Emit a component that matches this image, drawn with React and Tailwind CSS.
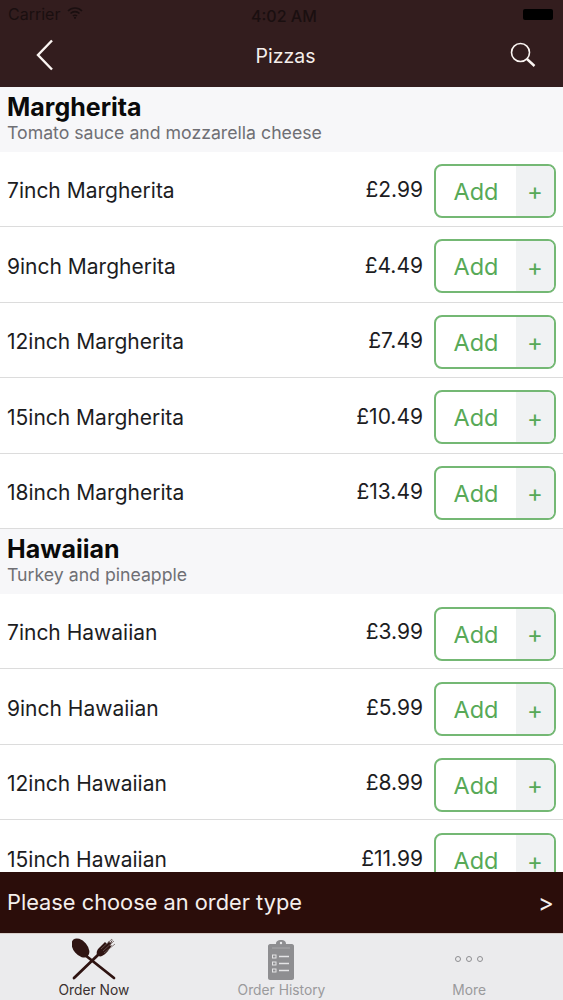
const margherita = [
  { name: "7inch Margherita", price: "£2.99" },
  { name: "9inch Margherita", price: "£4.49" },
  { name: "12inch Margherita", price: "£7.49" },
  { name: "15inch Margherita", price: "£10.49" },
  { name: "18inch Margherita", price: "£13.49" },
];

const hawaiian = [
  { name: "7inch Hawaiian", price: "£3.99" },
  { name: "9inch Hawaiian", price: "£5.99" },
  { name: "12inch Hawaiian", price: "£8.99" },
  { name: "15inch Hawaiian", price: "£11.99" },
];

const SectionHeader = ({ title, subtitle }) => (
  <div className="h-[64.5px] bg-[#f7f7f9] pl-[7px] pt-[4px]">
    <div className="text-[25px] leading-[32px] font-bold text-[#0a0a0a]">{title}</div>
    <div className="text-[17.7px] leading-[20px] text-[#6f6f74]">{subtitle}</div>
  </div>
);

const Row = ({ name, price, low }) => (
  <div className="h-[75.5px] flex items-center bg-white border-b border-[#dcdcdc] pl-[7px] pr-[7px] pt-[4px]">
    <div className="flex-1 text-[21px] text-[#1d1d1f]">{name}</div>
    <div className="text-[21px] text-[#1d1d1f] mr-[11px] -mt-[2px]">{price}</div>
    <div className={low ? "w-[122px] h-[54px] mt-[2px] flex rounded-[8px] border-2 border-[#74b874] overflow-hidden text-[#57a957]" : "w-[122px] h-[54px] flex rounded-[8px] border-2 border-[#74b874] overflow-hidden text-[#57a957]"}>
      <div className="w-[80px] flex items-center justify-center text-[23.5px] pt-[1px]">Add</div>
      <div className="flex-1 flex items-center justify-center bg-[#f0f2f3] text-[24px] pt-[3px]">+</div>
    </div>
  </div>
);

const SpoonFork = () => (
  <svg width="44" height="42" viewBox="0 0 44 42">
    <ellipse cx="8.5" cy="10" rx="7" ry="11" transform="rotate(-40 8.5 10)" fill="#2f1412" />
    <path d="M13 17L42 40" stroke="#2f1412" strokeWidth="2.8" strokeLinecap="round" />
    <path d="M2 40L27 16" stroke="#2f1412" strokeWidth="2.8" strokeLinecap="round" />
    <path d="M25 17C24 13 26 11 28 9L33 4L35 6L37 3L38 5L41 1L38 8L40 7C37 12 34 16 30 18C28 19 26 18 25 17Z" fill="#2f1412" />
    <path d="M29 11L40 1M31 13L42 3M32 15L43 6" stroke="#6b5a58" strokeWidth="0.8" fill="none" />
  </svg>
);

const Clipboard = () => (
  <svg width="26" height="40" viewBox="0 0 26 40">
    <path d="M2 4H8C8 1 10 0 13 0C16 0 18 1 18 4H24C25 4 26 5 26 6V38C26 39 25 40 24 40H2C1 40 0 39 0 38V6C0 5 1 4 2 4Z" fill="#8e8e91" />
    <circle cx="13" cy="3" r="1.2" fill="#ececee" />
    <path d="M4 8H22" stroke="#a9a9ab" strokeWidth="1" />
    <rect x="4.5" y="15" width="3.5" height="3" fill="none" stroke="#e4e4e6" strokeWidth="1" />
    <rect x="4.5" y="22" width="3.5" height="3" fill="none" stroke="#e4e4e6" strokeWidth="1" />
    <rect x="4.5" y="29" width="3.5" height="3" fill="none" stroke="#e4e4e6" strokeWidth="1" />
    <path d="M11 16.5H21M11 23.5H21M11 30.5H21" stroke="#e4e4e6" strokeWidth="1.3" />
  </svg>
);

const App = () => {
  return (
    <div
      className="w-[563px] h-[1000px] flex flex-col overflow-hidden bg-white"
      style={{ fontFamily: "Inter, 'Open Sans', sans-serif" }}
    >
      <div className="h-[87px] shrink-0 bg-[#331d1e] flex flex-col">
        <div className="h-[28px] flex items-center justify-between pl-[8px] pr-[10px] text-[16px] text-[#1a0f10] relative">
          <div className="flex items-center gap-[7px]">
            <span>Carrier</span>
            <svg width="16" height="12" viewBox="0 0 16 12" className="-mt-[3px]">
              <path d="M1 4C5 0 11 0 15 4M3.5 6.5C6 4 10 4 12.5 6.5M6 9C7 8 9 8 10 9" stroke="#1a0f10" strokeWidth="1.6" fill="none" />
              <circle cx="8" cy="10.8" r="1.1" fill="#1a0f10" />
            </svg>
          </div>
          <span className="absolute left-[251px] top-[4px] font-medium">4:02 AM</span>
          <div className="w-[30px] h-[11px] bg-black rounded-[2px]" />
        </div>
        <div className="flex-1 flex items-center justify-between pl-[36px] pr-[27px]">
          <svg width="18" height="32" viewBox="0 0 18 32" className="-mt-[6px]">
            <path d="M16 1.5L2 16L16 30.5" stroke="#fbf5f2" strokeWidth="2.4" fill="none" />
          </svg>
          <div className="text-[19.5px] text-[#f5efec] pl-[7px] -mt-[1px]">Pizzas</div>
          <svg width="26" height="26" viewBox="0 0 26 26" className="-mt-[6px]">
            <circle cx="10.5" cy="10.5" r="9" stroke="#fbf5f2" strokeWidth="1.6" fill="none" />
            <path d="M17 17L24.5 24" stroke="#fbf5f2" strokeWidth="2.4" />
          </svg>
        </div>
      </div>

      <div className="flex-1 overflow-hidden">
        <SectionHeader title="Margherita" subtitle="Tomato sauce and mozzarella cheese" />
        {margherita.map((item) => (
          <Row key={item.name} name={item.name} price={item.price} />
        ))}
        <SectionHeader title="Hawaiian" subtitle="Turkey and pineapple" />
        {hawaiian.map((item) => (
          <Row key={item.name} name={item.name} price={item.price} low />
        ))}
      </div>

      <div className="h-[61px] shrink-0 bg-[#2b0d0a] flex items-center justify-between pl-[7px] pr-[9px] text-[21.8px] text-[#f5efec]">
        <span>Please choose an order type</span>
        <span className="text-[24px]">&gt;</span>
      </div>

      <div className="h-[67px] shrink-0 bg-[#ebebed] grid grid-cols-3 border-t border-[#d8cfcb]">
        <div className="flex flex-col items-center pt-[4px]">
          <SpoonFork />
          <span className="text-[13.8px] leading-[16px] mt-[2px] text-[#3a3030]">Order Now</span>
        </div>
        <div className="flex flex-col items-center pt-[6px]">
          <Clipboard />
          <span className="text-[13.8px] leading-[16px] mt-[2px] text-[#9a9a9c]">Order History</span>
        </div>
        <div className="flex flex-col items-center">
          <div className="h-[43px] flex items-center gap-[5px] pt-[7px]">
            <span className="w-[6px] h-[6px] rounded-full border border-[#8e8e91]" />
            <span className="w-[6px] h-[6px] rounded-full border border-[#8e8e91]" />
            <span className="w-[6px] h-[6px] rounded-full border border-[#8e8e91]" />
          </div>
          <span className="text-[13.8px] leading-[16px] mt-[5px] text-[#9a9a9c]">More</span>
        </div>
      </div>
    </div>
  );
};

export default App;
